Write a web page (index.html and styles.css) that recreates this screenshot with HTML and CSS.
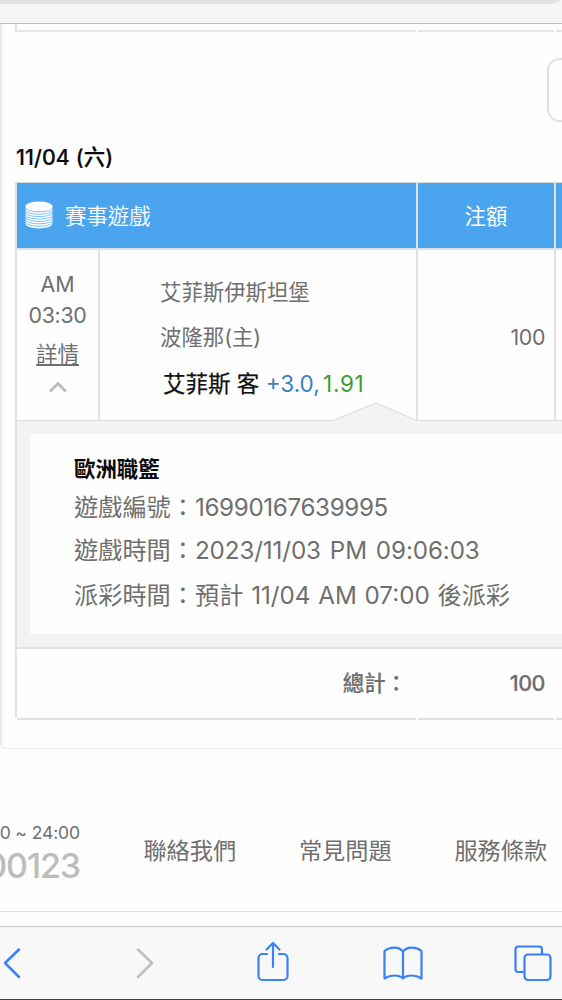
FILE: index.html
```html
<!DOCTYPE html>
<html lang="zh-Hant">
<head>
<meta charset="utf-8">
<title>11/04 (六)</title>
<link rel="stylesheet" href="styles.css">
</head>
<body>
<header class="browser-top"><div class="address"></div></header>
<main class="page">
  <section class="card">
    <div class="previous"><i></i><i></i><i></i></div>
    <div class="actions"><div class="button"></div></div>
    <h2 class="date">11/04 (六)</h2>
    <div class="bets">
      <div class="row head">
        <div class="cell game">
          <svg class="coins" width="28" height="28" viewBox="0 0 28 28">
            <path fill="#fff" d="M.5 5.300h27v17c0 3-6 5.200-13.500 5.200S.5 25.300.5 22.300z"/>
            <g fill="none" stroke="#4aa5ee" stroke-width=".7">
              <path d="M.5 6.300c0 6 27 6 27 0M.5 8.700c0 6 27 6 27 0M.5 11.100c0 6 27 6 27 0M.5 13.500c0 6 27 6 27 0M.5 15.900c0 6 27 6 27 0M.5 18.300c0 6 27 6 27 0M.5 20.700c0 6 27 6 27 0"/>
            </g>
            <ellipse cx="14" cy="5.300" rx="13.500" ry="4.800" fill="#fff"/>
          </svg>
          <span>賽事遊戲</span>
        </div>
        <div class="cell amount-head">注額</div>
        <div class="cell"></div>
      </div>
      <div class="row bet">
        <div class="cell time">
          <span class="ampm">AM</span>
          <span class="clock">03:30</span>
          <a class="more">詳情</a>
          <svg width="18" height="12" viewBox="0 0 18 12" fill="none" stroke="#bdbdbd" stroke-width="3"><path d="M1 10.500 9 2.500l8 8"/></svg>
        </div>
        <div class="cell match">
          <div class="team">艾菲斯伊斯坦堡</div>
          <div class="team">波隆那(主)</div>
          <div class="pick">艾菲斯 客 <span class="line">+3.0,</span> <span class="odds">1.91</span></div>
        </div>
        <div class="cell amount">100</div>
        <div class="cell"></div>
      </div>
      <div class="detail">
        <svg class="notch" width="90" height="20" viewBox="0 0 90 20"><path d="M1 18.500 46 1l42 17.500V20H1z" fill="#f3f3f3"/><path d="M0 18.500h3L46 1l41 17.500h3" fill="none" stroke="#dedede" stroke-width="1.200"/></svg>
        <div class="detail-box">
          <h3>歐洲職籃</h3>
          <p><span>遊戲編號：</span><span class="v1">16990167639995</span></p>
          <p><span>遊戲時間：</span><span class="v2">2023/11/03 PM 09:06:03</span></p>
          <p><span>派彩時間：</span><span class="v3">預計 11/04 AM 07:00 後派彩</span></p>
        </div>
      </div>
      <div class="total">
        <div class="total-label">總計：</div>
        <div class="total-value">100</div>
        <div class="total-rest"></div>
      </div>
    </div>
  </section>
  <footer class="footer">
    <div class="phone"><span class="hours">0 ~ 24:00</span><span class="number">00123</span></div>
    <a>聯絡我們</a><a>常見問題</a><a>服務條款</a>
  </footer>
</main>
<nav class="toolbar">
  <svg width="562" height="72" viewBox="0 0 562 72" fill="none" stroke="#3a80f6" stroke-width="2.200" stroke-linecap="round" stroke-linejoin="round">
    <path d="M19 22.500 5 36l14 14" stroke-width="2.500"/>
    <path d="M138 22.500 152 36l-14 14" stroke="#bfbfbf" stroke-width="2.500"/>
    <path d="M267 27h-4.500a4 4 0 0 0-4 4v18a4 4 0 0 0 4 4h21a4 4 0 0 0 4-4V31a4 4 0 0 0-4-4H279M273 40V16.500M266.500 22.500l6.500-6.500 6.500 6.500"/>
    <path d="M403 24.500c-4-5-13-5-18.500-.5v27.500c6-4 14.500-4 18.500 0 4-4 12.500-4 18.500 0V24c-5.500-4.500-14.500-4.500-18.500.5zM403 24.500v27"/>
    <path d="M523.500 45h-5a3 3 0 0 1-3-3V22.500a3 3 0 0 1 3-3H539a3 3 0 0 1 3 3V27"/>
    <rect x="524.500" y="27.500" width="26" height="25.500" rx="3.500"/>
  </svg>
</nav>
</body>
</html>
```
FILE: styles.css
```css
* { box-sizing: border-box; }
body {
  margin: 0; width: 562px; height: 1000px; overflow: hidden;
  display: flex; flex-direction: column;
  background: #fefefe; color: #6f6f6f;
  font-family: Inter, "Noto Sans CJK TC", sans-serif;
  font-size: 21.400px; white-space: nowrap;
}
h2, h3, p { margin: 0; }
.browser-top { height: 24px; flex: none; background: #f6f6f6; border-bottom: 1px solid #bcbcbc; }
.address { height: 4px; margin-right: 2px; background: #e2e2e2; border-bottom-right-radius: 12px 4px; }
.page { height: 902px; flex: none; overflow: hidden; }
.card {
  height: 725px; width: 600px; border: solid #ececec; border-width: 0 0 1px 2px;
  border-bottom-left-radius: 5px; padding-left: 13px;
  box-shadow: inset 1px 0 1px #f9f9f9;
}
.previous { height: 8px; display: grid; grid-template-columns: 401px 136px 50px; column-gap: 2px; }
.previous i { border-bottom: 2px solid #e4e4e4; }
.previous i:first-child { border-left: 2px solid #e0e0e0; }
.actions { height: 91px; padding: 26px 0 0 532px; }
.button { width: 60px; height: 64px; border: 2px solid #e1e1e1; border-radius: 13px; }
.date { height: 59px; line-height: 68px; padding-left: 1px; color: #0a0a0a; font-size: 21.400px; font-weight: 500; letter-spacing: .1px; -webkit-text-stroke: .2px; }
.bets { width: 585px; height: 536px; border-left: 2px solid #e1e1e1; border-top: 1px solid #dcdcdc; }
.row { display: grid; }
.row .cell { border-right: 2px solid #e1e1e1; }
.head { height: 66px; grid-template-columns: 401px 138px 1fr; background: #4aa5ee; border-bottom: 1px solid #d8e0e6; color: #fff; line-height: 67px; }
.game { display: flex; align-items: center; padding-left: 8px; gap: 12px; font-weight: 350; }
.coins { margin-top: -3px; }
.amount-head { text-align: center; }
.bet { height: 172px; grid-template-columns: 83px 318px 138px 1fr; border-top: 1px solid #e1e1e1; border-bottom: 1px solid #dcdcdc; }
.time { display: flex; flex-direction: column; align-items: center; padding: 19px 0 0; line-height: 31px; }
.clock { letter-spacing: -.3px; }
.more { margin-top: 8px; text-decoration: underline; text-underline-offset: 2px; text-decoration-thickness: 1.500px; }
.time svg { margin-top: 11px; }
.match { padding: 20px 0 0 60px; line-height: 45px; }
.pick { padding-left: 3px; line-height: 48px; color: #111; font-size: 22.500px; -webkit-text-stroke: .25px; }
.pick span { -webkit-text-stroke: 0; font-size: 22.500px; }
.pick .line { color: #3b7fc4; margin-right: -3px; }
.pick .odds { color: #429b2c; letter-spacing: .7px; }
.amount { text-align: right; padding-right: 9px; line-height: 174px; letter-spacing: -.4px; }
.detail { height: 228px; position: relative; background: #f3f3f3; border-bottom: 2px solid #e1e1e1; padding: 13px 0 13px 13px; }
.notch { position: absolute; left: 313px; top: -19px; }
.detail-box { height: 200px; background: #fefefe; padding: 17px 0 0 44px; }
h3 { color: #0a0a0a; font-size: 21.400px; line-height: 37px; font-weight: 700; }
.detail p { display: flex; font-size: 24.200px; line-height: 44px; }
.detail p:nth-of-type(1) { line-height: 40px; }
.detail p:nth-of-type(2) { line-height: 46px; }
.v1 { letter-spacing: -.35px; }
.v2 { letter-spacing: -.1px; word-spacing: 2.200px; }
.v3 { word-spacing: 1px; }
.total { height: 69px; display: grid; grid-template-columns: 399px 136px 50px; column-gap: 2px; line-height: 69px; font-weight: 500; }
.total > div { border-bottom: 2px solid #e1e1e1; }
.total-label, .total-value { text-align: right; padding-right: 9px; -webkit-text-stroke: .2px; }
.total-value { letter-spacing: -.4px; }
.footer { height: 163px; display: flex; border-bottom: 1px solid #dedede; font-size: 23.200px; line-height: 204px; }
.footer a { width: 155.500px; text-align: center; flex: none; }
.phone { width: 80px; margin-right: 32px; flex: none; display: flex; flex-direction: column; align-items: flex-end; padding-top: 73px; }
.hours { font-size: 17.600px; line-height: 22px; letter-spacing: -.15px; }
.number { font-size: 34px; line-height: 44px; font-weight: 500; color: #bcbcbc; letter-spacing: -1.100px; margin-right: 0; }
.toolbar { height: 74px; flex: none; background: #f8f8f8; border-top: 1px solid #c8c8c8; border-bottom: 1px solid #444; }
.toolbar svg { display: block; }
```
